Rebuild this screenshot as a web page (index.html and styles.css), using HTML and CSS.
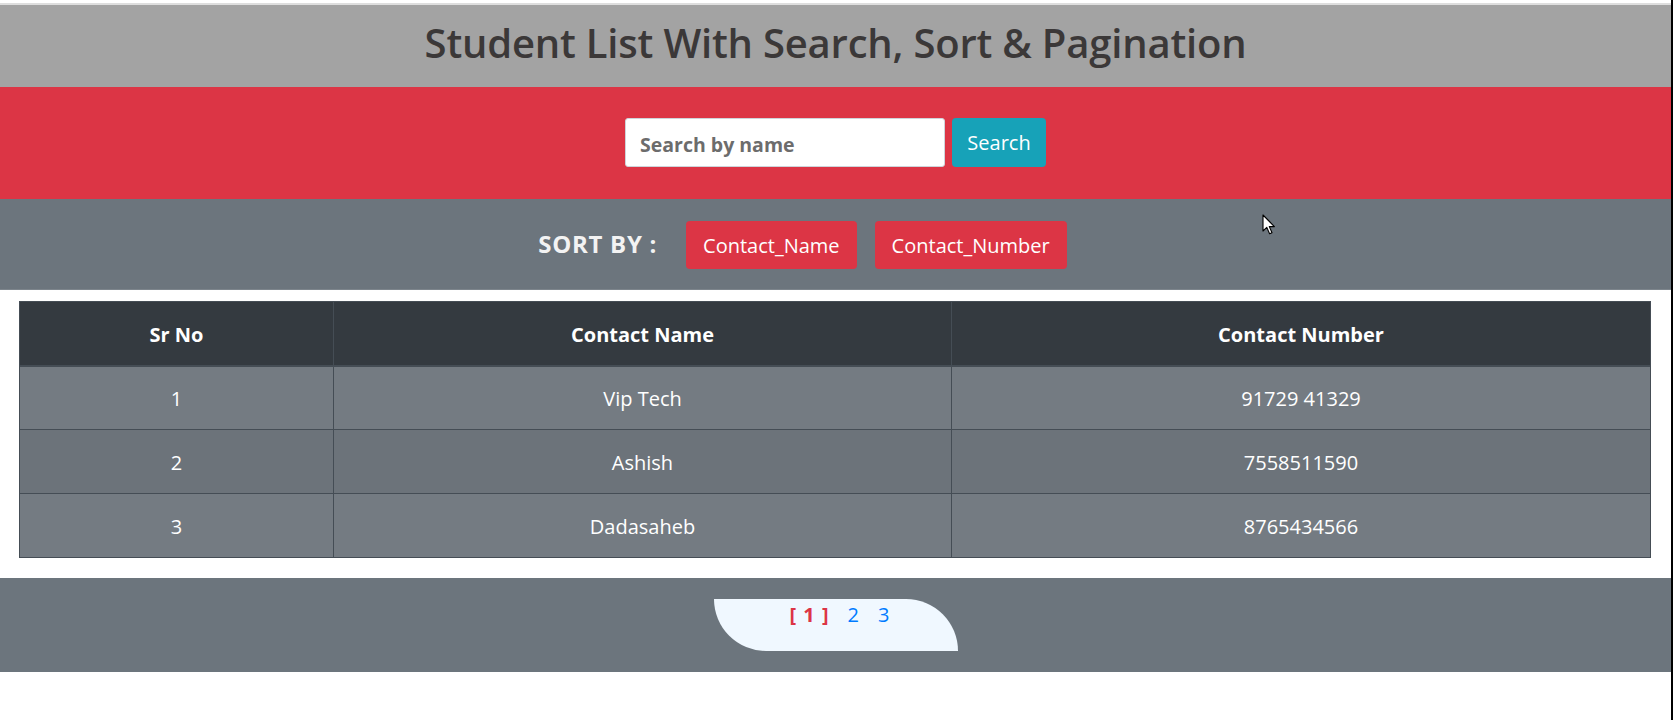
FILE: index.html
```html
<!DOCTYPE html>
<html lang="en">
<head>
<meta charset="utf-8">
<title>Student List</title>
<link rel="stylesheet" href="styles.css">
</head>
<body>
<div class="page">
  <header class="title-bar">
    <h1 class="title">Student List With Search, Sort &amp; Pagination</h1>
  </header>
  <section class="search-bar">
    <input class="search-input" type="text" placeholder="Search by name">
    <button class="btn btn-info">Search</button>
  </section>
  <section class="sort-bar">
    <div class="sort-group">
      <span class="sort-label">SORT BY :</span>
      <button class="btn btn-danger">Contact_Name</button>
      <button class="btn btn-danger">Contact_Number</button>
    </div>
  </section>
  <div class="table-wrap">
    <table class="contacts">
      <thead>
        <tr><th class="c1">Sr No</th><th class="c2">Contact Name</th><th class="c3">Contact Number</th></tr>
      </thead>
      <tbody>
        <tr><td>1</td><td>Vip Tech</td><td>91729 41329</td></tr>
        <tr><td>2</td><td>Ashish</td><td>7558511590</td></tr>
        <tr><td>3</td><td>Dadasaheb</td><td>8765434566</td></tr>
      </tbody>
    </table>
  </div>
  <footer class="pager-bar">
    <div class="pager">
      <span class="page-current">[&nbsp;1&nbsp;]</span>
      <a class="page-link">2</a>
      <a class="page-link">3</a>
    </div>
  </footer>
  <svg class="cursor" width="14" height="22" viewBox="0 0 14 22"><path d="M1 1 L1 17 L4.8 13.4 L7.6 19.8 L10 18.8 L7.3 12.6 L12.4 12.6 Z" fill="#fff" stroke="#000" stroke-width="1.1" stroke-linejoin="round"/></svg>
</div>
</body>
</html>
```
FILE: styles.css
```css
html { background: #000; }
body {
  margin: 0 2px 0 0;
  background: #fff;
  min-height: 720px;
  font-family: "Open Sans", "Noto Sans", sans-serif;
}
.page { position: relative; padding-top: 3px; }
.title-bar {
  background: #a3a3a3;
  border-top: 2px solid #dedede;
  height: 82px;
  display: flex;
  align-items: center;
  justify-content: center;
}
.title {
  margin: 0 0 8px;
  font-size: 40px;
  font-weight: 600;
  color: #3b3838;
  letter-spacing: -0.2px;
}
.search-bar {
  background: #dc3545;
  height: 112px;
  display: flex;
  justify-content: center;
  align-items: flex-start;
  padding-top: 31px;
  box-sizing: border-box;
  gap: 7px;
}
.search-input {
  width: 320px;
  height: 49px;
  box-sizing: border-box;
  border: 1px solid #ced4da;
  border-radius: 3px;
  padding: 3px 14px 0;
  font-family: inherit;
  font-size: 19.5px;
  font-weight: 700;
  outline: none;
}
.search-input::placeholder { color: #6c6c6c; opacity: 1; }
.btn {
  font-family: inherit;
  font-size: 20px;
  color: #fff;
  border: none;
  border-radius: 4px;
  height: 49px;
  padding: 0 16px;
  cursor: pointer;
}
.btn-info { background: #17a2b8; width: 94px; padding: 0; }
.btn-danger { background: #dc3545; }
.sort-bar {
  background: #6c757d;
  height: 91px;
  box-sizing: border-box;
  padding-top: 22px;
  border-bottom: 1px solid #7d858c;
  display: flex;
  justify-content: center;
}
.sort-group {
  display: flex;
  align-items: center;
  height: 48px;
  padding-right: 66px;
}
.sort-label {
  color: #f3f3f3;
  font-size: 24px;
  font-weight: 700;
  letter-spacing: 0.7px;
  margin-right: 29px;
  margin-top: -4px;
}
.sort-group .btn { height: 48px; margin-right: 18px; padding: 0 17px; }
.sort-group .btn:last-child { margin-right: 0; }
.table-wrap { padding: 11px 20px 20px 19px; }
.contacts {
  width: 100%;
  border-collapse: collapse;
  border: 1px solid #454d55;
  color: #fff;
  font-size: 20px;
  text-align: center;
}
.contacts th, .contacts td {
  border: 1px solid #454d55;
  height: 64px;
  padding: 2px 12px 0;
  box-sizing: border-box;
}
.contacts th {
  background: #343a40;
  font-weight: 700;
  height: 64px;
  border-bottom: 2px solid #454d55;
}
.c1 { width: 314px; }
.c2 { width: 618px; }
.contacts tbody tr:nth-child(odd) td { background: #747b82; }
.contacts tbody tr:nth-child(even) td { background: #6c737a; }
.pager-bar {
  background: #6c757d;
  height: 94px;
  box-sizing: border-box;
  padding-top: 21px;
  display: flex;
  justify-content: center;
}
.pager {
  width: 244px;
  height: 52px;
  box-sizing: border-box;
  background: #f0f8ff;
  border-radius: 0 52px 0 52px;
  display: flex;
  justify-content: center;
  gap: 19px;
  padding-top: 2px;
  padding-left: 8px;
  font-size: 20px;
}
.page-current { color: #dc3545; font-weight: 700; word-spacing: 2px; }
.page-link { color: #007bff; }
.cursor { position: absolute; left: 1262px; top: 214px; }
```
